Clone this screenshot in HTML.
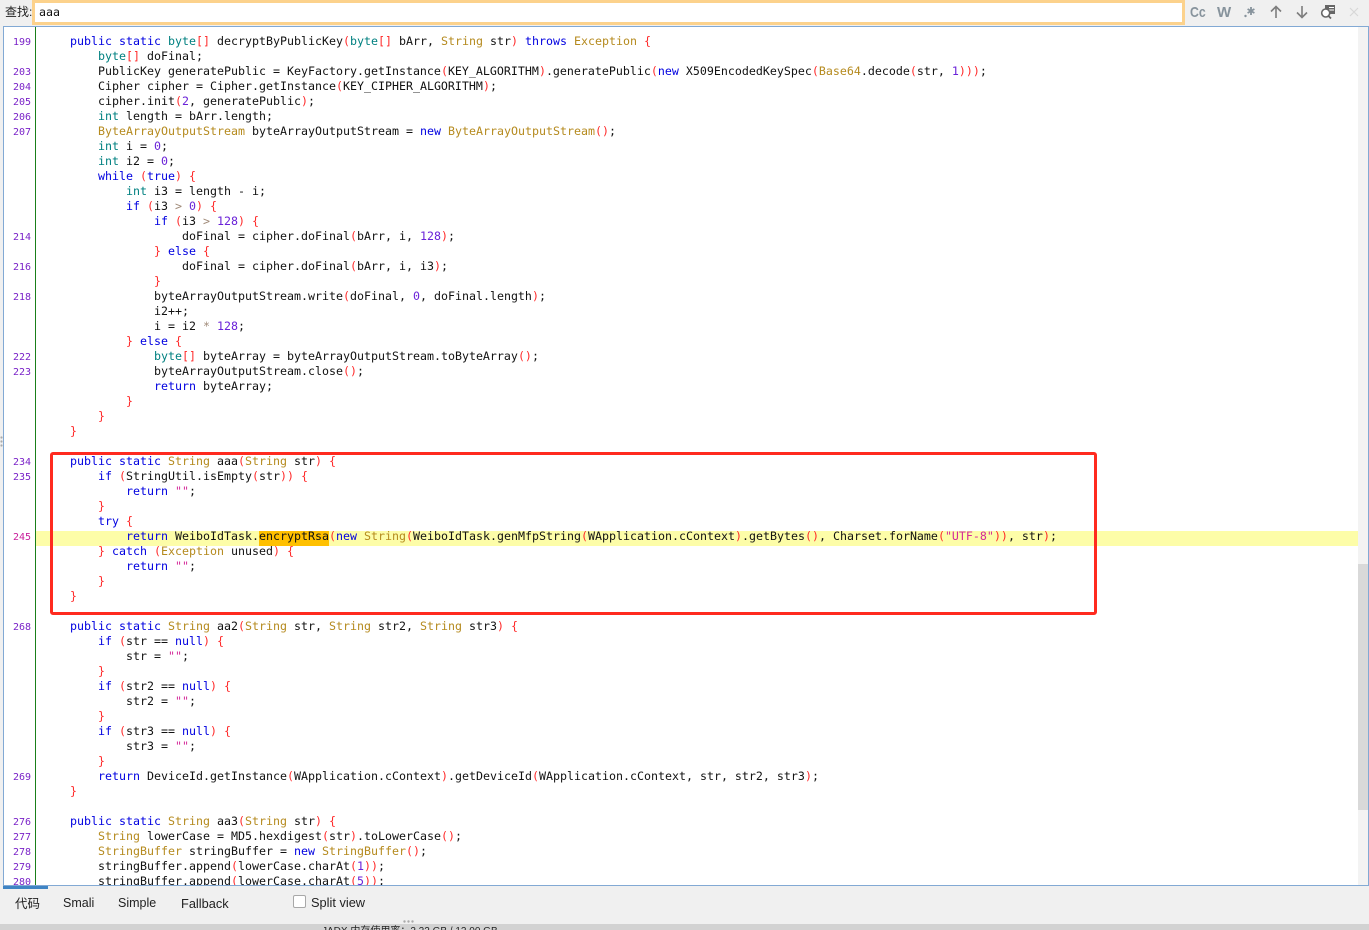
<!DOCTYPE html>
<html><head><meta charset="utf-8"><title>JADX</title>
<style>
html,body{margin:0;padding:0;width:1369px;height:930px;overflow:hidden;background:#f0f0f0}
.abs{position:absolute}
#editor{position:absolute;left:3px;top:26px;width:1364px;height:858px;border:1px solid #82a9d4;background:#fff;overflow:hidden}
pre{margin:0;font-family:"DejaVu Sans Mono","Liberation Mono",monospace;font-size:11.63px;line-height:15px;color:#111}
#code{position:absolute;left:38px;top:7px}
#nums{position:absolute;left:0;width:27px;top:8px;text-align:right;font-size:10px;color:#7a22c8}
b{font-weight:normal;color:#0000e0}i{font-style:normal;color:#008080}u{text-decoration:none;color:#b58a1e}
em{font-style:normal;color:#ff2a2a}q{quotes:none;color:#6a22d8}s{text-decoration:none;color:#d42a9a}
.ui{font-family:"Liberation Sans","Noto Sans CJK SC",sans-serif;color:#222;position:absolute;white-space:pre}
</style></head><body>
<div class="ui" style="left:5px;top:3px;font-size:12px">查找:</div>
<div class="abs" style="left:32px;top:0;width:1147px;height:19px;border:3px solid #fcd28c;background:#fff"></div>
<pre class="abs" style="left:39px;top:5px;color:#111">aaa</pre>
<div class="ui" style="left:1190px;top:4px;font-size:15px;font-weight:bold;color:#87939c;transform:scaleX(.82);transform-origin:0 0">Cc</div>
<div class="ui" style="left:1217px;top:4px;font-size:15px;font-weight:bold;color:#87939c">W</div>
<svg class="abs" style="left:1240px;top:2px" width="129" height="20" viewBox="0 0 129 20" fill="none">
<circle cx="5.5" cy="14" r="1.2" fill="#87939c"/>
<path d="M11 5v8M7.6 7l6.8 4M14.4 7l-6.8 4" stroke="#87939c" stroke-width="1.8"/>
<path d="M36 16V5M31 9.5l5-5 5 5" stroke="#7d7d7d" stroke-width="1.6"/>
<path d="M62 4v11M57 10.5l5 5 5-5" stroke="#7d7d7d" stroke-width="1.6"/>
<rect x="85" y="3" width="10" height="9" fill="#666"/>
<path d="M89 5.5h5M89 8h5" stroke="#fff" stroke-width="1"/>
<circle cx="85.7" cy="11" r="4" fill="#fff" stroke="#666" stroke-width="1.6"/>
<path d="M88.5 14l2.5 2.5" stroke="#666" stroke-width="1.8"/>
<path d="M110 6l8 8M118 6l-8 8" stroke="#d8d8d8" stroke-width="1.2"/>
</svg>
<div id="editor">
<div class="abs" style="left:31px;top:0;width:0;height:858px;border-left:1px solid #1a7f1a"></div>
<div class="abs" style="left:32px;top:504px;width:1322px;height:15px;background:#fdfda8"></div>
<div class="abs" style="left:255px;top:504px;width:70px;height:15px;background:#ffc000"></div>
<div class="abs" style="left:1354px;top:0;width:10px;height:858px;background:#f3f3f3"></div>
<div class="abs" style="left:1354px;top:537px;width:10px;height:246px;background:#d9d9d9"></div>
<pre id="nums">199

203
204
205
206
207






214

216

218



222
223





234
235



<s style="color:#c8209c">245</s>





268









269


276
277
278
279
280</pre>
<pre id="code">    <b>public</b> <b>static</b> <i>byte</i><em>[]</em> decryptByPublicKey<em>(</em><i>byte</i><em>[]</em> bArr, <u>String</u> str<em>)</em> <b>throws</b> <u>Exception</u> <em>{</em>
        <i>byte</i><em>[]</em> doFinal;
        PublicKey generatePublic = KeyFactory.getInstance<em>(</em>KEY_ALGORITHM<em>)</em>.generatePublic<em>(</em><b>new</b> X509EncodedKeySpec<em>(</em><u>Base64</u>.decode<em>(</em>str, <q>1</q><em>)))</em>;
        Cipher cipher = Cipher.getInstance<em>(</em>KEY_CIPHER_ALGORITHM<em>)</em>;
        cipher.init<em>(</em><q>2</q>, generatePublic<em>)</em>;
        <i>int</i> length = bArr.length;
        <u>ByteArrayOutputStream</u> byteArrayOutputStream = <b>new</b> <u>ByteArrayOutputStream</u><em>()</em>;
        <i>int</i> i = <q>0</q>;
        <i>int</i> i2 = <q>0</q>;
        <b>while</b> <em>(</em><b>true</b><em>)</em> <em>{</em>
            <i>int</i> i3 = length - i;
            <b>if</b> <em>(</em>i3 <span style="color:#a08a78">&gt;</span> <q>0</q><em>)</em> <em>{</em>
                <b>if</b> <em>(</em>i3 <span style="color:#a08a78">&gt;</span> <q>128</q><em>)</em> <em>{</em>
                    doFinal = cipher.doFinal<em>(</em>bArr, i, <q>128</q><em>)</em>;
                <em>}</em> <b>else</b> <em>{</em>
                    doFinal = cipher.doFinal<em>(</em>bArr, i, i3<em>)</em>;
                <em>}</em>
                byteArrayOutputStream.write<em>(</em>doFinal, <q>0</q>, doFinal.length<em>)</em>;
                i2++;
                i = i2 <span style="color:#a08a78">*</span> <q>128</q>;
            <em>}</em> <b>else</b> <em>{</em>
                <i>byte</i><em>[]</em> byteArray = byteArrayOutputStream.toByteArray<em>()</em>;
                byteArrayOutputStream.close<em>()</em>;
                <b>return</b> byteArray;
            <em>}</em>
        <em>}</em>
    <em>}</em>

    <b>public</b> <b>static</b> <u>String</u> aaa<em>(</em><u>String</u> str<em>)</em> <em>{</em>
        <b>if</b> <em>(</em>StringUtil.isEmpty<em>(</em>str<em>))</em> <em>{</em>
            <b>return</b> <s>""</s>;
        <em>}</em>
        <b>try</b> <em>{</em>
            <b>return</b> WeiboIdTask.encryptRsa<em>(</em><b>new</b> <u>String</u><em>(</em>WeiboIdTask.genMfpString<em>(</em>WApplication.cContext<em>)</em>.getBytes<em>()</em>, Charset.forName<em>(</em><s>"UTF-8"</s><em>))</em>, str<em>)</em>;
        <em>}</em> <b>catch</b> <em>(</em><u>Exception</u> unused<em>)</em> <em>{</em>
            <b>return</b> <s>""</s>;
        <em>}</em>
    <em>}</em>

    <b>public</b> <b>static</b> <u>String</u> aa2<em>(</em><u>String</u> str, <u>String</u> str2, <u>String</u> str3<em>)</em> <em>{</em>
        <b>if</b> <em>(</em>str == <b>null</b><em>)</em> <em>{</em>
            str = <s>""</s>;
        <em>}</em>
        <b>if</b> <em>(</em>str2 == <b>null</b><em>)</em> <em>{</em>
            str2 = <s>""</s>;
        <em>}</em>
        <b>if</b> <em>(</em>str3 == <b>null</b><em>)</em> <em>{</em>
            str3 = <s>""</s>;
        <em>}</em>
        <b>return</b> DeviceId.getInstance<em>(</em>WApplication.cContext<em>)</em>.getDeviceId<em>(</em>WApplication.cContext, str, str2, str3<em>)</em>;
    <em>}</em>

    <b>public</b> <b>static</b> <u>String</u> aa3<em>(</em><u>String</u> str<em>)</em> <em>{</em>
        <u>String</u> lowerCase = MD5.hexdigest<em>(</em>str<em>)</em>.toLowerCase<em>()</em>;
        <u>StringBuffer</u> stringBuffer = <b>new</b> <u>StringBuffer</u><em>()</em>;
        stringBuffer.append<em>(</em>lowerCase.charAt<em>(</em><q>1</q><em>))</em>;
        stringBuffer.append<em>(</em>lowerCase.charAt<em>(</em><q>5</q><em>))</em>;</pre>
<div class="abs" style="left:46px;top:425px;width:1041px;height:157px;border:3px solid #ff2a1f;border-radius:3px"></div>
</div>
<div class="abs" style="left:3px;top:886px;width:45px;height:3px;background:#3f84c4"></div>
<div class="ui" style="left:15px;top:893px;font-size:12.5px">代码</div>
<div class="ui" style="left:63px;top:896px;font-size:12.5px">Smali</div>
<div class="ui" style="left:118px;top:896px;font-size:12.5px">Simple</div>
<div class="ui" style="left:181px;top:896px;font-size:12.8px">Fallback</div>
<div class="abs" style="left:293px;top:895px;width:11px;height:11px;border:1px solid #a8a8a8;border-radius:2px;background:#fff"></div>
<div class="ui" style="left:311px;top:895px;font-size:12.8px">Split view</div>
<div class="abs" style="left:0;top:924px;width:1369px;height:6px;background:#d2d2d2;overflow:hidden"><div class="ui" style="left:322px;top:2px;font-size:10px;line-height:12px">JADX 内存使用率：2.22 GB / 12.00 GB</div></div>
<svg class="abs" style="left:403px;top:920px" width="12" height="3"><circle cx="1.5" cy="1.5" r="1.2" fill="#aaa"/><circle cx="5.5" cy="1.5" r="1.2" fill="#aaa"/><circle cx="9.5" cy="1.5" r="1.2" fill="#aaa"/></svg>
<svg class="abs" style="left:0;top:436px" width="3" height="12"><circle cx="1.5" cy="1.5" r="1.1" fill="#aaa"/><circle cx="1.5" cy="5.5" r="1.1" fill="#aaa"/><circle cx="1.5" cy="9.5" r="1.1" fill="#aaa"/></svg>
</body></html>
